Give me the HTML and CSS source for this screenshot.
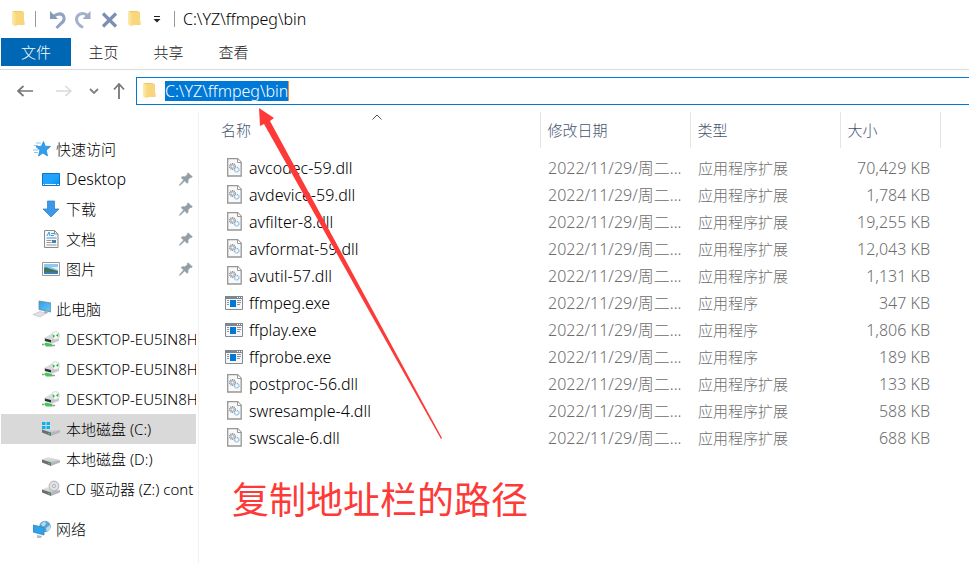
FILE: index.html
```html
<!DOCTYPE html>
<html lang="zh-CN">
<head>
<meta charset="utf-8">
<title>C:\YZ\ffmpeg\bin</title>
<link rel="stylesheet" href="styles.css">
</head>
<body>
<svg class="defs" aria-hidden="true">
  <defs>
    <linearGradient id="fold" x1="0" x2="1" y1="0" y2="0"><stop offset="0" stop-color="#fdeaa9"/><stop offset="1" stop-color="#f9d983"/></linearGradient>
    <linearGradient id="screen" x1="0" x2="1" y1="0" y2="1"><stop offset="0" stop-color="#2f9df4"/><stop offset=".5" stop-color="#1fa5ff"/><stop offset="1" stop-color="#0a8df0"/></linearGradient>
    <linearGradient id="monitor" x1="0" x2="1" y1="0" y2="1"><stop offset="0" stop-color="#2f9fe9"/><stop offset="1" stop-color="#6ac6fb"/></linearGradient>
    <linearGradient id="metal" x1="0" x2="0" y1="0" y2="1"><stop offset="0" stop-color="#e6e6e8"/><stop offset="1" stop-color="#c0c2c5"/></linearGradient>
    <symbol id="i-folder" viewBox="0 0 14 18"><path d="M1 1h8l3 1v13H5z" fill="#f2c860"/><path d="M3 2h9v9h.6v4H3z" fill="#f9d67d"/><path d="M0 1l4.500 2v13.500L0 14.500z" fill="url(#fold)"/></symbol>
    <symbol id="i-drive" viewBox="0 0 18 16"><path d="M0 8.500L6 6l12 3-8 3z" fill="url(#metal)"/><path d="M0 8.500l9 3V15L0 11.500z" fill="#6b6d70"/><path d="M9 11.500L18 9v2.500L9 15z" fill="#b4b6b9"/><path d="M6 12l2 .6v1l-2-.6z" fill="#39d84c"/></symbol>
    <symbol id="i-netdrive" viewBox="0 0 18 16"><path d="M2 7L9 3l8 3v4l-7 3-8-3z" fill="#d8dadc"/><path d="M3 7.500l6 1.500v2.500L3 10z" fill="#303236"/><path d="M9 9l8-3v3.500L9 12z" fill="#c3c5c8"/><path d="M2 13l2-1.500 6 1.500v2.500H4z" fill="#43c65a"/><path d="M0 13.500h2m8 1h3" stroke="#999" stroke-width="1.500"/><circle cx="13.500" cy="4.500" r="4" fill="#f7f9f7" stroke="#cdd0cd" stroke-width=".7"/><path d="M10.500 3l2.500 2-2 2zM16.500 2.200L14 4.500l2.200 1.600z" fill="#27b43e"/></symbol>
    <symbol id="i-pin" viewBox="0 0 14 14"><path d="M9 .8l4.400 3.900-1 1-1-.3-2.400 2.500c.4 1.600.1 2.700-.7 3.500L5.600 9 1.500 13l-1.100.4.4-1.100L4.600 8.100 2 5.600c1-1 2.200-1.300 3.700-.9L8.400 2.700l-.3-1z" fill="#939ea7" stroke="#939ea7" stroke-width=".5"/></symbol>
    <symbol id="i-dll" viewBox="0 0 15 19"><path d="M.7.700h10l3.500 3.500v13.800H.7z" fill="#f9f9f9" stroke="#969696" stroke-width="1.300"/><path d="M10.500.8v3.700h3.700" fill="#fff" stroke="#969696"/><circle cx="5.500" cy="8.500" r="2.700" fill="none" stroke="#8c959d" stroke-width="1.600" stroke-dasharray="1.100 .6"/><circle cx="5.500" cy="8.500" r="1.500" fill="none" stroke="#8c959d" stroke-width=".7"/><circle cx="9.700" cy="11.700" r="2.200" fill="none" stroke="#83b4dc" stroke-width="1.500" stroke-dasharray="1 .6"/></symbol>
    <symbol id="i-exe" viewBox="0 0 18 14"><path d="M.5.500h17v13H.5z" fill="#f5f6f7" stroke="#858b92"/><path d="M0 0h18v3H0z" fill="#7f868d"/><path d="M12 1.500h1m1 0h1m1 0h1" stroke="#fff"/><path d="M5 4h6v7H5z" fill="#0078d7"/><path d="M2 4.500h2M2 6.500h2M2 8.500h2M12 4.500h4M12 6.500h4M12 8.500h3" stroke="#8b959e"/></symbol>
  </defs>
</svg>

<header class="titlebar">
  <svg class="folder"><use href="#i-folder"/></svg>
  <i class="rule"></i>
  <button class="tool" aria-label="撤消"><svg viewBox="0 0 18 19"><path d="M4 7l5-2.500c7-2.500 9.500 5 4 9L8.500 18" fill="none" stroke="#92a3c0" stroke-width="3"/><path d="M2 1v8h8z" fill="#8799b9"/></svg></button>
  <button class="tool" aria-label="恢复"><svg viewBox="0 0 18 19"><path d="M13 5C8 1.500 2.500 4.500 2.500 9.500c0 3.500 3 6 6.500 8" fill="none" stroke="#a3b2ca" stroke-width="3"/><path d="M16.500 1v8h-8z" fill="#9dabc4"/></svg></button>
  <button class="tool" aria-label="删除"><svg viewBox="0 0 18 19"><path d="M3 3.500l13 13M16 3.500l-13 13" stroke="#7c8fb2" stroke-width="3.200"/></svg></button>
  <button class="tool" aria-label="新建文件夹"><svg class="folder"><use href="#i-folder"/></svg></button>
  <button class="tool more" aria-label="自定义快速访问工具栏"><svg viewBox="0 0 8 8"><path d="M1 1.500h6" stroke="#222"/><path d="M.5 4h7L4 7.500z" fill="#222"/></svg></button>
  <i class="rule"></i>
  <h1>C:\YZ\ffmpeg\bin</h1>
</header>

<nav class="ribbon">
  <button class="file">文件</button><button>主页</button><button>共享</button><button>查看</button>
</nav>

<div class="navbar">
  <button aria-label="后退"><svg class="arrow" viewBox="0 0 16 14"><path d="M1 7h15M6.500 2L1 7l5.500 5" fill="none" stroke="#777" stroke-width="1.700"/></svg></button>
  <button aria-label="前进" disabled><svg class="arrow" viewBox="0 0 16 14"><path d="M0 7h15M9.500 2l5.500 5-5.500 5" fill="none" stroke="#d9d9d9" stroke-width="1.500"/></svg></button>
  <button aria-label="最近位置"><svg class="chev" viewBox="0 0 10 6"><path d="M1 1l4 4 4-4" fill="none" stroke="#808080" stroke-width="1.800"/></svg></button>
  <button aria-label="上移"><svg class="up" viewBox="0 0 12 16"><path d="M6 1v15M1 6.500L6 1l5 5.500" fill="none" stroke="#777" stroke-width="1.800"/></svg></button>
  <div class="address">
    <svg class="folder"><use href="#i-folder"/></svg>
    <span class="path" role="textbox" aria-label="地址" contenteditable="true" spellcheck="false">C:\YZ\ffmpeg\bin</span>
  </div>
</div>

<div class="body">
  <aside class="tree">
    <a href="#" class="root"><svg viewBox="0 0 18 18"><path d="M10.500 1.500l1.700 4.700 5.300.3-4.200 3.700 1.200 5.700-4.700-2.800L5.500 16l1.400-5.700L3 6.600l5.400-.4z" fill="#2f9fee" stroke="#1f83d0" stroke-width=".7"/><path d="M3 3h5M1 5.500h4M0 10h5M1 12.500h4" stroke="#8cc6ef"/></svg><span>快速访问</span></a>
    <a href="#" class="latin"><svg viewBox="0 0 18 18"><path d="M.5 3.500h17v12H.5z" fill="url(#screen)" stroke="#0877c9"/><path d="M1 14.500h1m1 0h11m1 0h2" stroke="#fff"/></svg><span>Desktop</span><svg class="pin"><use href="#i-pin"/></svg></a>
    <a href="#"><svg viewBox="0 0 18 18"><path d="M5.500 1h7v8h4.500l-8 8-8-8h4.500z" fill="#3d98e8" stroke="#3183d0" stroke-width=".8"/></svg><span>下载</span><svg class="pin"><use href="#i-pin"/></svg></a>
    <a href="#"><svg viewBox="0 0 18 18"><path d="M2.500.500h10l3.500 3.500v13.500H2.500z" fill="#f8f8f8" stroke="#8a8a8a"/><path d="M12.500.500V4H16" fill="none" stroke="#8a8a8a"/><path d="M5 6l2-4 1 4M9 3.500h3M9 5.500h3M4.500 8h10" fill="none" stroke="#3c9bdc"/><path d="M4.500 10.500h5m-5 2h5m-5 2.500h10" stroke="#999"/><path d="M10 10h4v3h-4z" fill="#4682aa"/></svg><span>文档</span><svg class="pin"><use href="#i-pin"/></svg></a>
    <a href="#"><svg viewBox="0 0 18 18"><path d="M.5 2.500h17v13H.5z" fill="#fff" stroke="#999"/><path d="M2 4h14v10H2z" fill="#8cc8f0"/><path d="M2 8c2-2 4 0 7 1l7 2v1H2z" fill="#41735e"/><path d="M9 7h7v3z" fill="#e6f2f9"/><path d="M2 12h14v2H2z" fill="#397cb0"/></svg><span>图片</span><svg class="pin"><use href="#i-pin"/></svg></a>
    <a href="#" class="root gap"><svg viewBox="0 0 18 18"><path d="M6 1l12 2v9L6 9.500z" fill="url(#monitor)" stroke="#70858f" stroke-width=".8"/><path d="M11 11l4 .7-1 2-3-1z" fill="#a5adb3"/><path d="M0 14.500l7-3 6 2-6 3.500z" fill="#dfe2e4" stroke="#b5babe" stroke-width=".6"/></svg><span>此电脑</span></a>
    <a href="#"><svg viewBox="0 0 18 16"><use href="#i-netdrive"/></svg><span>DESKTOP-EU5IN8H</span></a>
    <a href="#"><svg viewBox="0 0 18 16"><use href="#i-netdrive"/></svg><span>DESKTOP-EU5IN8H</span></a>
    <a href="#"><svg viewBox="0 0 18 16"><use href="#i-netdrive"/></svg><span>DESKTOP-EU5IN8H</span></a>
    <a href="#" class="sel"><svg viewBox="0 0 18 16"><use href="#i-drive"/><path d="M0 1h3.500v3H0zM4.500 1H8v3H4.500zM0 5h3.500v3H0zM4.500 5H8v3H4.500z" fill="#0bb2ee"/></svg><span>本地磁盘 (C:)</span></a>
    <a href="#"><svg viewBox="0 0 18 16"><use href="#i-drive"/></svg><span>本地磁盘 (D:)</span></a>
    <a href="#"><svg viewBox="0 0 18 16"><use href="#i-drive"/><circle cx="12" cy="5" r="4.900" fill="#dfe2e4" stroke="#a3a6a8" stroke-width=".8"/><circle cx="12" cy="5" r="1.500" fill="#fff" stroke="#999" stroke-width=".8"/></svg><span>CD 驱动器 (Z:) cont</span></a>
    <a href="#" class="root gap"><svg viewBox="0 0 18 18"><circle cx="12" cy="6.500" r="5.700" fill="#5aa3d8"/><path d="M8 4l4-3 1 3-3 3zM13 8l4-3v5l-3 2z" fill="#b8dbef"/><path d="M0 5l11 2.500v7.500L0 12z" fill="#2aa4f1" stroke="#477f9f" stroke-width=".8"/><path d="M4 15l5 1-1 2H4z" fill="#b4bdc2"/></svg><span>网络</span></a>
  </aside>

  <main>
    <svg class="sort" viewBox="0 0 10 6"><path d="M.5 5.500L5 1l4.500 4.500" fill="none" stroke="#555"/></svg>
    <table>
      <colgroup><col><col class="c-date"><col class="c-type"><col class="c-size"><col class="c-rest"></colgroup>
      <thead><tr><th>名称</th><th>修改日期</th><th>类型</th><th>大小</th><th></th></tr></thead>
      <tbody>
        <tr><td><svg class="dll"><use href="#i-dll"/></svg>avcodec-59.dll</td><td>2022/11/29/周二...</td><td>应用程序扩展</td><td>70,429 KB</td></tr>
        <tr><td><svg class="dll"><use href="#i-dll"/></svg>avdevice-59.dll</td><td>2022/11/29/周二...</td><td>应用程序扩展</td><td>1,784 KB</td></tr>
        <tr><td><svg class="dll"><use href="#i-dll"/></svg>avfilter-8.dll</td><td>2022/11/29/周二...</td><td>应用程序扩展</td><td>19,255 KB</td></tr>
        <tr><td><svg class="dll"><use href="#i-dll"/></svg>avformat-59.dll</td><td>2022/11/29/周二...</td><td>应用程序扩展</td><td>12,043 KB</td></tr>
        <tr><td><svg class="dll"><use href="#i-dll"/></svg>avutil-57.dll</td><td>2022/11/29/周二...</td><td>应用程序扩展</td><td>1,131 KB</td></tr>
        <tr><td><svg class="exe"><use href="#i-exe"/></svg>ffmpeg.exe</td><td>2022/11/29/周二...</td><td>应用程序</td><td>347 KB</td></tr>
        <tr><td><svg class="exe"><use href="#i-exe"/></svg>ffplay.exe</td><td>2022/11/29/周二...</td><td>应用程序</td><td>1,806 KB</td></tr>
        <tr><td><svg class="exe"><use href="#i-exe"/></svg>ffprobe.exe</td><td>2022/11/29/周二...</td><td>应用程序</td><td>189 KB</td></tr>
        <tr><td><svg class="dll"><use href="#i-dll"/></svg>postproc-56.dll</td><td>2022/11/29/周二...</td><td>应用程序扩展</td><td>133 KB</td></tr>
        <tr><td><svg class="dll"><use href="#i-dll"/></svg>swresample-4.dll</td><td>2022/11/29/周二...</td><td>应用程序扩展</td><td>588 KB</td></tr>
        <tr><td><svg class="dll"><use href="#i-dll"/></svg>swscale-6.dll</td><td>2022/11/29/周二...</td><td>应用程序扩展</td><td>688 KB</td></tr>
      </tbody>
    </table>
    <p class="note">复制地址栏的路径</p>
  </main>
</div>
<svg class="pointer" viewBox="0 0 184 332" aria-hidden="true"><path d="M0 0L15 10 11 13 183 330 182 331 5 16 1 18z" fill="#fd3a38"/></svg>
</body>
</html>
```
FILE: styles.css
```css
* { box-sizing: border-box; }
body {
  margin: 0;
  min-height: 100vh;
  display: flex;
  flex-direction: column;
  background: #fff;
  color: #000;
  font: 300 15px/20px "Noto Sans", "Noto Sans CJK SC", sans-serif;
  overflow: hidden;
  position: relative;
}
button { border: 0; padding: 0; background: none; font: inherit; color: inherit; display: flex; align-items: center; justify-content: center; }
a { color: inherit; text-decoration: none; }
svg { flex: none; display: block; }
.defs { position: absolute; width: 0; height: 0; }
.folder { width: 14px; height: 18px; }

.titlebar { display: flex; align-items: center; height: 38px; padding: 0 12px; }
.titlebar .rule { width: 1px; height: 16px; background: #999; margin: 0 12px 0 9px; }
.tool { width: 18px; margin-right: 8px; }
.tool svg:not(.folder) { width: 18px; height: 19px; }
.tool.more { margin: 0 4px 0 1px; width: 8px; }
.tool.more svg:not(.folder) { width: 8px; height: 8px; }
.titlebar .more + .rule { margin: 0 8px 0 9px; }
h1 { margin: 0; font: inherit; font-size: 16px; }

.ribbon { display: flex; height: 32px; border-bottom: 1px solid #dadbdc; padding: 0 0 3px 1px; color: #222; }
.ribbon button { width: 65px; }
.ribbon .file { width: 70px; background: #0067b5; color: #fff; }

.navbar { display: flex; height: 42px; align-items: center; padding: 0 0 0 17px; }
.navbar .arrow { width: 16px; height: 14px; margin-right: 23px; }
.navbar .chev { width: 10px; height: 6px; margin: 0 14px 0 -6px; }
.navbar .up { width: 12px; height: 16px; margin-right: 11px; }
.address { flex: 1; display: flex; align-items: center; height: 28px; border: 1px solid #0078d7; border-right: 0; padding-left: 6px; gap: 8px; }
.path { background: #0078d7; color: #fff; border-right: 1px solid #f08a3c; outline: 0; font-size: 16px; }

.body { display: flex; flex: 1; }
.tree { width: 199px; border-right: 1px solid #f0f0f0; padding: 22px 2px 0 1px; flex: none; }
.tree a { display: flex; align-items: center; height: 30px; padding-left: 41px; gap: 6px; white-space: nowrap; overflow: hidden; }
.tree .root { padding-left: 32px; gap: 5px; }
.tree .latin { font-size: 16px; }
.tree .gap { margin-top: 10px; }
.tree a > svg { width: 18px; height: 18px; }
.tree a > .pin { width: 14px; height: 14px; margin: 0 3px 0 auto; }
.tree .sel { background: #d9d9d9; }

main { flex: 1; min-width: 0; position: relative; }
.sort { position: absolute; left: 173px; top: 2px; width: 10px; height: 6px; }
table { width: 100%; border-collapse: collapse; table-layout: fixed; }
.c-date, .c-type { width: 150px; }
.c-size { width: 100px; }
.c-rest { width: 29px; }
th { font-weight: inherit; text-align: left; color: #44546e; height: 36px; padding: 0 7px; border-left: 1px solid #e5e5e5; }
th:first-child { border: 0; padding-left: 22px; }
tbody::before { content: ""; display: block; height: 6px; }
td { height: 27px; padding: 0 10px 0 8px; color: #6d6d6d; white-space: nowrap; font-size: 16px; }
td:first-child { color: #000; padding-left: 26px; }
td:nth-child(2) { padding-right: 0; }
td:nth-child(3) { font-size: 15px; }
td:nth-child(4) { text-align: right; }
td svg { display: inline-block; vertical-align: -1px; width: 18px; height: 14px; margin: 0 6px 0 0; }
td .dll { width: 15px; height: 19px; margin: 0 7px 0 2px; vertical-align: -3px; }
.note { margin: 27px 0 0 33px; font: 400 37px/40px "Noto Sans CJK SC", sans-serif; color: #fd3a38; }
.pointer { position: absolute; left: 259px; top: 108px; width: 184px; height: 332px; pointer-events: none; }
```
